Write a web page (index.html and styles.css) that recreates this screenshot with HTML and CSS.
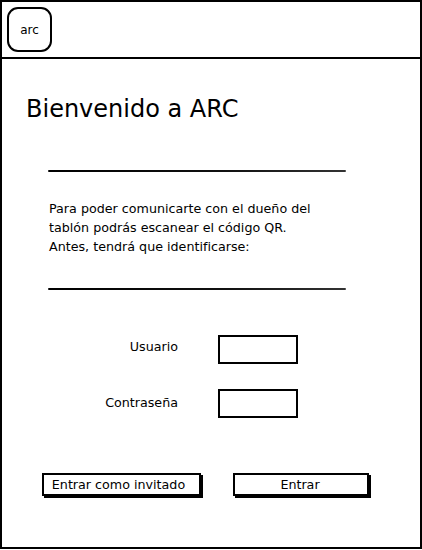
FILE: index.html
```html
<!DOCTYPE html>
<html lang="es">
<head>
<meta charset="utf-8">
<title>ARC</title>
<link rel="stylesheet" href="styles.css">
</head>
<body>
<div class="frame">
  <header class="header">
    <div class="logo">arc</div>
  </header>
  <main class="main">
    <h1 class="title">Bienvenido a ARC</h1>
    <div class="rule rule-top"></div>
    <p class="intro">Para poder comunicarte con el dueño del<br>tablón podrás escanear el código QR.<br>Antes, tendrá que identificarse:</p>
    <div class="rule rule-bottom"></div>
    <div class="form">
      <label class="label label-user" for="u">Usuario</label>
      <input class="field" id="u" type="text">
      <label class="label label-pass" for="p">Contraseña</label>
      <input class="field" id="p" type="password">
    </div>
    <div class="actions">
      <button class="btn btn-guest" type="button">Entrar como invitado</button>
      <button class="btn btn-enter" type="button">Entrar</button>
    </div>
  </main>
</div>
</body>
</html>
```

FILE: styles.css
```css
html, body {
  margin: 0;
  padding: 0;
  background: #fff;
}

body {
  font-family: "DejaVu Sans", sans-serif;
  color: #000;
}

.frame {
  box-sizing: border-box;
  width: 422px;
  height: 549px;
  border: 2px solid #000;
  display: flex;
  flex-direction: column;
}

.header {
  padding: 5px;
  height: 45px;
  border-bottom: 2px solid #000;
  display: flex;
  align-items: flex-start;
}

.logo {
  box-sizing: border-box;
  width: 45px;
  height: 45px;
  border: 2px solid #000;
  border-radius: 11px;
  display: flex;
  align-items: center;
  justify-content: center;
  font-size: 12px;
}

.main {
  padding: 36px 0 0 24px;
  display: flex;
  flex-direction: column;
  align-items: flex-start;
}

.title {
  margin: 0;
  font-size: 24px;
  line-height: 28px;
  font-weight: normal;
}

.rule {
  width: 298px;
  height: 2px;
  margin-left: 22px;
  background: linear-gradient(to right, #000 0%, #111 60%, #333 100%);
  border-radius: 1px;
}

.rule-top {
  margin-top: 47px;
}

.intro {
  margin: 28px 0 0 23px;
  font-size: 12.7px;
  line-height: 18.8px;
}

.rule-bottom {
  margin-top: 32px;
}

.form {
  margin: 45px 0 0 77px;
  display: grid;
  grid-template-columns: 75px 80px;
  grid-auto-rows: 29px;
  column-gap: 40px;
  row-gap: 25px;
  align-items: center;
}

.label {
  font-size: 12.7px;
  line-height: 15px;
  text-align: right;
  white-space: nowrap;
}

.label-user {
  margin-top: -6px;
}

.label-pass {
  margin-top: -3px;
}

.field {
  box-sizing: border-box;
  width: 80px;
  height: 29px;
  margin: 0;
  padding: 0;
  border: 2px solid #000;
  background: #fff;
  outline: none;
}

.actions {
  margin: 55px 0 0 16px;
  display: flex;
  gap: 32px;
}

.btn {
  box-sizing: border-box;
  height: 23px;
  margin: 0;
  padding: 0;
  border: 2px solid #000;
  background: #fff;
  box-shadow: 2px 2px 0 #000;
  font-family: "DejaVu Sans", sans-serif;
  font-size: 12.7px;
  color: #000;
  line-height: 18px;
  text-align: center;
}

.btn-guest {
  width: 159px;
  padding-right: 6px;
}

.btn-enter {
  width: 136px;
  padding-right: 2px;
}
```
